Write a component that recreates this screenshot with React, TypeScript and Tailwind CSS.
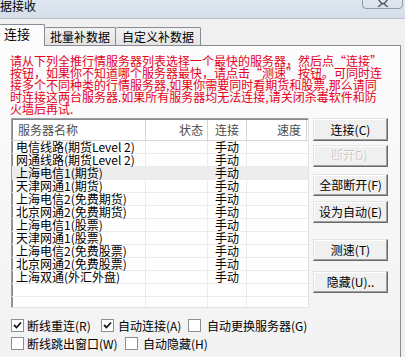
import React from "react";

const lines = [
  "请从下列全推行情服务器列表选择一个最快的服务器，然后点“连接”",
  "按钮，如果你不知道哪个服务器最快，请点击“测速”按钮。可同时连",
  "接多个不同种类的行情服务器,如果你需要同时看期货和股票,那么请同",
  "时连接这两台服务器.如果所有服务器均无法连接,请关闭杀毒软件和防",
  "火墙后再试.",
];

const servers = [
  "电信线路(期货Level 2)",
  "网通线路(期货Level 2)",
  "上海电信1(期货)",
  "天津网通1(期货)",
  "上海电信2(免费期货)",
  "北京网通2(免费期货)",
  "上海电信1(股票)",
  "天津网通1(股票)",
  "上海电信2(免费股票)",
  "北京网通2(免费股票)",
  "上海双通(外汇外盘)",
];

function Check({ checked }: { checked?: boolean }) {
  return (
    <span className="w-[13px] h-[13px] shrink-0 border border-[#8e8f8f] bg-white flex items-center justify-center">
      {checked && (
        <svg width="9" height="9" viewBox="0 0 9 9">
          <path d="M1 4 L3.5 6.5 L8 1.5" stroke="#1a1a1a" strokeWidth="1.8" fill="none" />
        </svg>
      )}
    </span>
  );
}

function Btn({ label, disabled, cls }: { label: string; disabled?: boolean; cls: string }) {
  return (
    <button
      className={`w-[75px] h-[22px] flex items-center justify-center text-[12px] leading-[12px] bg-[#f0f0f0] border border-t-[#e3e3e3] border-l-[#e3e3e3] border-r-[#696969] border-b-[#696969] shadow-[inset_-1px_-1px_0_#a0a0a0,inset_1px_1px_0_#ffffff] ${cls} ${
        disabled ? "text-[#f8f8f8] [text-shadow:-1px_-1px_0_#c4c4c4]" : "text-black"
      }`}
    >
      {label}
    </button>
  );
}

export default function App() {
  return (
    <div className="w-[405px] h-[357px] overflow-hidden bg-[#f0f0f0] text-[12px] text-black font-['Noto_Sans_CJK_SC','Liberation_Sans',sans-serif]">
      {/* Title bar */}
      <div className="h-[19px] flex items-start bg-gradient-to-b from-[#dfe7f0] to-[#d3dde8] border-b border-[#b8c3cf]">
        <span className="leading-[12px]">据接收</span>
        <div className="ml-auto mr-[2px] -mt-[12px] w-[41px] h-[21px] rounded-b-[4px] border border-[#8c9aab] bg-gradient-to-b from-[#e9eef4] to-[#d9e1ea] flex items-end justify-center pb-[1px]">
          <svg width="12" height="8" viewBox="0 0 12 8">
            <path d="M1 0 L5 5 L1 8 M11 0 L7 5 L11 8 M4 4.5 L8 4.5" stroke="#4a5563" strokeWidth="1.3" fill="none" />
          </svg>
        </div>
      </div>

      {/* Tabs */}
      <div className="h-[27px] flex items-end relative z-10">
        <div className="w-[46px] h-[22px] -ml-[1px] pl-[4px] pt-[3px] bg-[#fcfcfc] border border-b-0 border-[#898c95] rounded-t-[2px] leading-[12px] text-[13px]">
          连接
        </div>
        <div className="h-[18px] mb-px px-[5px] pt-[3px] leading-[12px] text-[12px] bg-gradient-to-b from-[#f2f2f2] to-[#e3e3e3] border border-b-0 border-l-0 border-[#898c95] rounded-t-[2px]">
          批量补数据
        </div>
        <div className="h-[18px] mb-px px-[6px] pt-[3px] leading-[12px] text-[12px] bg-gradient-to-b from-[#f2f2f2] to-[#e3e3e3] border border-b-0 border-l-0 border-[#898c95] rounded-t-[2px]">
          自定义补数据
        </div>
      </div>

      {/* Panel */}
      <div className="-mt-px -ml-px w-[402px] h-[320px] border border-[#898c95] bg-gradient-to-b from-[#fcfcfc] to-[#f2f2f2]">
        <div className="pl-[10px] pt-[9px] text-[#e4001b] text-[12px] leading-[12px] whitespace-nowrap">
          {lines.map((l) => (
            <div key={l}>{l}</div>
          ))}
        </div>

        <div className="flex mt-[3px] pl-[11px]">
          {/* Server list */}
          <div className="w-[298px] h-[190px] bg-white border border-t-[#a0a0a0] border-l-[#a0a0a0] border-r-[#e3e3e3] border-b-[#e3e3e3] shadow-[inset_1px_1px_0_#828790] overflow-hidden">
            <div className="flex h-[22px] pt-px pl-px border-b border-[#d5d5d5] text-[#4d4d4d] leading-[12px]">
              <div className="w-[133px] pl-[5px] flex items-center border-r border-[#d5d5d5]">服务器名称</div>
              <div className="w-[62px] pr-[4px] flex items-center justify-end border-r border-[#d5d5d5]">状态</div>
              <div className="w-[39px] flex items-center justify-center border-r border-[#d5d5d5]">连接</div>
              <div className="w-[60px] pr-[5px] flex items-center justify-end border-r border-[#d5d5d5]">速度</div>
            </div>
            {[...servers, "", ""].map((s, i) => (
              <div
                key={i}
                className={`flex h-[13px] pl-px border-b border-[#ececec] leading-[12px] ${i === 2 ? "bg-[#ededed]" : ""}`}
              >
                <div className="w-[133px] pl-[3px] flex items-center whitespace-nowrap border-r border-[#ececec]">{s}</div>
                <div className="w-[62px] border-r border-[#ececec]" />
                <div className="w-[39px] flex items-center justify-center border-r border-[#ececec]">{s ? "手动" : ""}</div>
                <div className="w-[60px]" />
              </div>
            ))}
          </div>

          {/* Buttons */}
          <div className="ml-[4px] flex flex-col">
            <Btn label="连接(C)" cls="h-[23px]" />
            <Btn label="断开D)" disabled cls="mt-[4px]" />
            <Btn label="全部断开(F)" cls="mt-[7px]" />
            <Btn label="设为自动(E)" cls="mt-[5px]" />
            <Btn label="测速(T)" cls="mt-[16px]" />
            <Btn label="隐藏(U).." cls="mt-[10px]" />
          </div>
        </div>

        {/* Checkboxes */}
        <div className="pl-[11px] mt-[11px] leading-[12px]">
          <div className="flex items-center h-[13px]">
            <div className="w-[90px] flex items-center gap-[3px]">
              <Check checked />
              <span>断线重连(R)</span>
            </div>
            <div className="w-[87px] flex items-center gap-[4px]">
              <Check checked />
              <span>自动连接(A)</span>
            </div>
            <div className="flex items-center gap-[6px]">
              <Check />
              <span>自动更换服务器(G)</span>
            </div>
          </div>
          <div className="flex items-center h-[13px] mt-[5px]">
            <div className="w-[114px] flex items-center gap-[3px]">
              <Check />
              <span>断线跳出窗口(W)</span>
            </div>
            <div className="flex items-center gap-[5px]">
              <Check />
              <span>自动隐藏(H)</span>
            </div>
          </div>
        </div>
      </div>
    </div>
  );
}
